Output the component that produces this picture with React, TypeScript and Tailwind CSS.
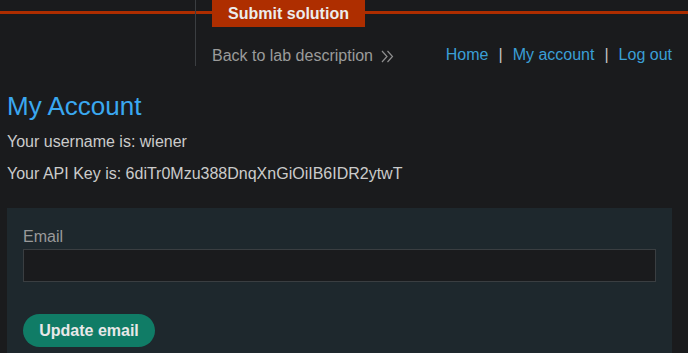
import React from "react";

export default function App() {
  return (
    <div className="min-h-[353px] w-full bg-[#1a1b1d] font-['Liberation_Sans',Arial,sans-serif] text-[16px] leading-[20px] text-[#cbcbcb]">
      {/* Header */}
      <div className="relative flex h-[66px]">
        <div className="absolute left-0 right-0 top-[11px] h-[3px] bg-[#ad2d00]" />
        <div className="relative w-[196px] shrink-0 border-r border-[#3b3e41]" />
        <div className="relative flex flex-1 flex-col pl-4 pr-4">
          <div className="flex">
            <div className="flex h-[27px] w-[153px] items-center justify-center bg-[#ae2e00] font-bold text-[#ececec]">
              Submit solution
            </div>
          </div>
          <div className="mt-[18px] flex items-center justify-between">
            <div className="flex items-center text-[#9b9b9b]">
              <span>Back to lab description</span>
              <svg className="ml-[8px]" width="13" height="13" viewBox="0 0 13 13" fill="none" stroke="#8f8f8f" strokeWidth="1.2">
                <path d="M1 1l5 5.5L1 12" />
                <path d="M6.5 1l5 5.5-5 5.5" />
              </svg>
            </div>
            <div className="mb-[2px] flex items-center text-[#3a9fd6]">
              <span>Home</span>
              <span className="mx-[10px] text-[#c4c4c4]">|</span>
              <span>My account</span>
              <span className="mx-[10px] text-[#c4c4c4]">|</span>
              <span>Log out</span>
            </div>
          </div>
        </div>
      </div>

      {/* Content */}
      <div className="pl-[7px] pr-[16px]">
        <h1 className="mt-[25px] text-[26px] leading-[30px] text-[#3aa8f0]">My Account</h1>
        <p className="mt-[11px]">Your username is: wiener</p>
        <p className="mt-[12px]">Your API Key is: 6diTr0Mzu388DnqXnGiOiIB6IDR2ytwT</p>

        <div className="mt-[24px] bg-[#1e282d] px-4 pt-[19px] pb-[20px]">
          <label className="block text-[#9a9a9a]">Email</label>
          <input
            type="text"
            className="mt-[2px] block h-[33px] w-full border border-[#3a3e41] bg-[#1a1b1d] px-2 text-[#cbcbcb] outline-none"
          />
          <button className="mt-[32px] flex h-[33px] w-[132px] items-center justify-center rounded-full bg-[#107c66] font-bold text-[#e8e8e8]">
            Update email
          </button>
        </div>
      </div>
    </div>
  );
}
